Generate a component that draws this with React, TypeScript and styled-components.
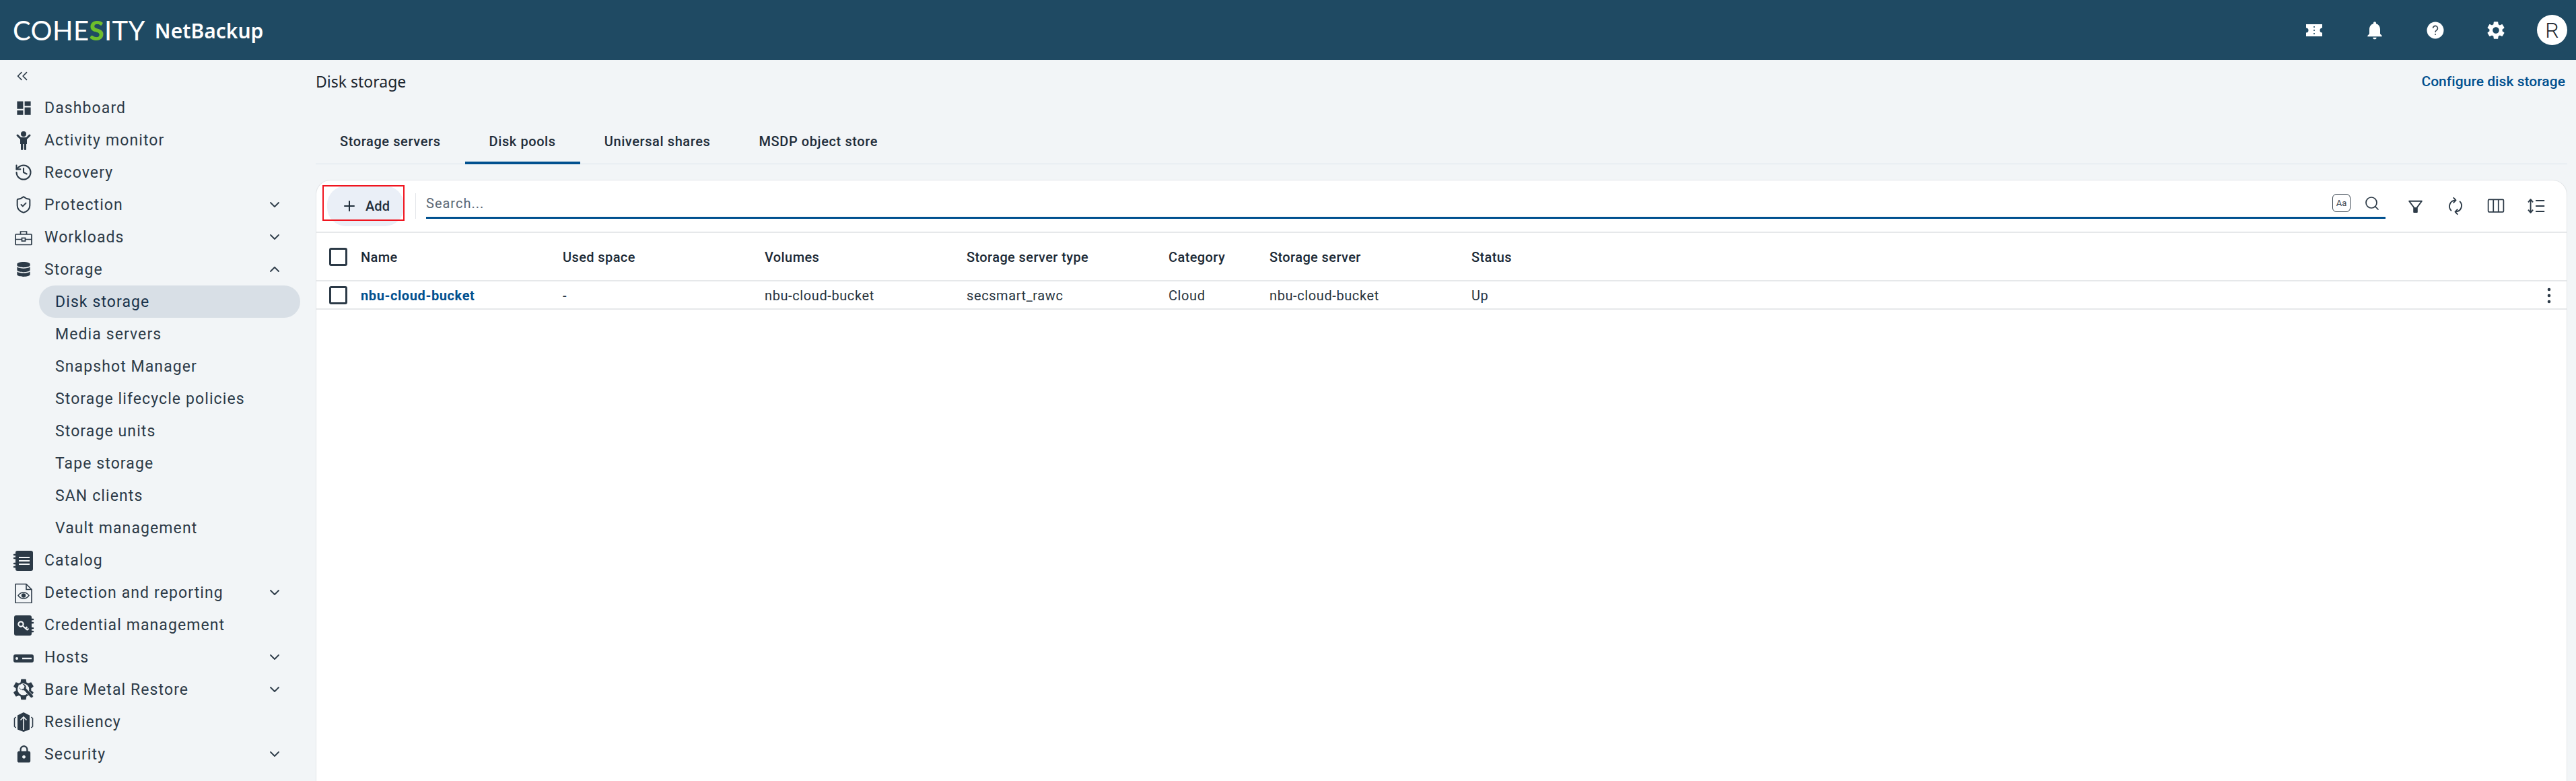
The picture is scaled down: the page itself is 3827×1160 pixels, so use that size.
import React from 'react';
import styled, { createGlobalStyle } from 'styled-components';
import { ChevronDown, ChevronUp, ChevronsLeft, History, Plus, Search, ShieldCheck } from 'lucide-react';
import { FaDatabase } from 'react-icons/fa';
import { MdDashboard, MdLock, MdNotifications, MdSettings } from 'react-icons/md';

const INK = '#2c3a47';
const BLUE = '#00508f';
const PAGE = '#f2f5f7';
const GEAR_PATH =
  'M19.14 12.94c.04-.3.06-.61.06-.94 0-.32-.02-.64-.07-.94l2.03-1.58a.49.49 0 0 0 .12-.61l-1.92-3.32a.488.488 0 0 0-.59-.22l-2.39.96c-.5-.38-1.03-.7-1.62-.94l-.36-2.54a.484.484 0 0 0-.48-.41h-3.84c-.24 0-.43.17-.47.41l-.36 2.54c-.59.24-1.13.57-1.62.94l-2.39-.96c-.22-.08-.47 0-.59.22L2.74 8.87c-.12.21-.08.47.12.61l2.03 1.58c-.05.3-.09.63-.09.94s.02.64.07.94l-2.03 1.58a.49.49 0 0 0-.12.61l1.92 3.32c.12.22.37.29.59.22l2.39-.96c.5.38 1.03.7 1.62.94l.36 2.54c.05.24.24.41.48.41h3.84c.24 0 .44-.17.47-.41l.36-2.54c.59-.24 1.13-.56 1.62-.94l2.39.96c.22.08.47 0 .59-.22l1.92-3.32c.12-.22.07-.47-.12-.61l-2.01-1.58z';

const GlobalStyle = createGlobalStyle`
  html, body {
    margin: 0;
    padding: 0;
    background: ${PAGE};
  }
  * {
    box-sizing: border-box;
  }
`;

const Canvas = styled.div`
  width: 3827px;
  height: 1160px;
  overflow: hidden;
  display: flex;
  flex-direction: column;
  background: ${PAGE};
  color: ${INK};
  font-family: Roboto, 'Liberation Sans', sans-serif;
`;

const TopBar = styled.header`
  flex: 0 0 89px;
  display: flex;
  align-items: center;
  padding: 0 13px 0 19px;
  background: #1f4a63;
  color: #fff;
`;

const Brand = styled.div`
  display: flex;
  align-items: center;
  gap: 14px;
  flex: 1;
`;

const LogoWord = styled.span`
  font-family: Lato, sans-serif;
  font-size: 40px;
  font-weight: 400;
  letter-spacing: 0.4px;
  line-height: 1;
`;

const LogoAccent = styled.span`
  color: #6ebe2c;
  font-weight: 900;
`;

const ProductName = styled.span`
  font-family: 'Noto Sans', sans-serif;
  font-size: 30px;
  font-weight: 600;
  line-height: 1;
  margin-top: 3px;
`;

const TopActions = styled.div`
  display: flex;
  align-items: center;
`;

const TopAction = styled.div`
  width: 90px;
  height: 48px;
  display: flex;
  align-items: center;
  justify-content: center;
  color: #fff;
`;

const Avatar = styled.div`
  width: 45px;
  height: 45px;
  margin-left: 16px;
  border-radius: 50%;
  display: flex;
  align-items: center;
  justify-content: center;
  background: #fff;
  color: #1c2630;
  font-size: 32px;
  font-weight: 300;
`;

const Body = styled.div`
  flex: 1;
  min-height: 0;
  display: flex;
`;

const Sidebar = styled.nav`
  flex: 0 0 469px;
`;

const CollapseRow = styled.div`
  height: 47px;
  display: flex;
  align-items: center;
  padding-left: 20px;
`;

const NavRow = styled.div`
  height: 48px;
  display: flex;
  align-items: center;
  padding: 0 49px 0 19px;
  font-size: 23px;
  letter-spacing: 1.1px;
  white-space: nowrap;
`;

const NavIcon = styled.span`
  flex: 0 0 32px;
  height: 32px;
  margin-right: 15px;
  display: flex;
  align-items: center;
  justify-content: center;
`;

const NavLabel = styled.span`
  flex: 1;
  padding-top: 1px;
`;

const SubRow = styled.div<{ $active?: boolean }>`
  height: 48px;
  width: 388px;
  margin-left: 58px;
  padding: 1px 0 0 24px;
  display: flex;
  align-items: center;
  border-radius: 24px;
  font-size: 23px;
  letter-spacing: 1.1px;
  background: ${({ $active }) => ($active ? '#d8dfe6' : 'transparent')};
  color: ${({ $active }) => ($active ? '#17314a' : INK)};
`;

const Main = styled.main`
  flex: 1;
  min-width: 0;
  display: flex;
  flex-direction: column;
  padding-right: 13px;
`;

const TitleRow = styled.div`
  flex: 0 0 64px;
  display: flex;
  align-items: center;
  justify-content: space-between;
  margin-bottom: 27px;
  padding-right: 3px;
`;

const Title = styled.h1`
  margin: 0;
  font-family: 'Noto Sans', sans-serif;
  font-size: 23px;
  font-weight: 400;
  color: #1c2630;
`;

const ConfigureLink = styled.a`
  font-size: 21px;
  font-weight: 500;
  letter-spacing: 0.05px;
  color: ${BLUE};
`;

const TabBar = styled.div`
  flex: 0 0 64px;
  display: flex;
  border-bottom: 1px solid #dbe3ea;
`;

const Tab = styled.div<{ $active?: boolean }>`
  padding: 0 36px;
  display: flex;
  align-items: center;
  font-size: 20px;
  font-weight: 500;
  letter-spacing: 0.6px;
  color: #1f2d3a;
  border-bottom: 4px solid ${({ $active }) => ($active ? BLUE : 'transparent')};
  margin-bottom: -1px;
`;

const Card = styled.section`
  flex: 1;
  margin-top: 23px;
  display: flex;
  flex-direction: column;
  background: #fff;
  border: 1px solid #e2e5e8;
  border-bottom: 0;
  border-radius: 22px 22px 0 0;
`;

const Toolbar = styled.div`
  flex: 0 0 78px;
  display: flex;
  align-items: center;
  padding: 0 15px 0 16px;
  border-bottom: 2px solid #e6e8ea;
`;

const AddButton = styled.div`
  position: relative;
  width: 114px;
  height: 60px;
  display: flex;
  align-items: center;
  justify-content: center;
  gap: 12px;
  border-radius: 28px;
  background: #eaeff7;
  font-size: 20px;
  font-weight: 500;
  color: #1f2d3a;
`;

const Annotation = styled.span`
  position: absolute;
  left: -7px;
  top: -1px;
  width: 122px;
  height: 53px;
  border: 2px solid #f0141e;
`;

const ToolDivider = styled.span`
  width: 1px;
  height: 38px;
  margin: 0 15px 0 17px;
  background: #e3e6e9;
`;

const SearchField = styled.div`
  flex: 1;
  height: 46px;
  margin-bottom: 8px;
  display: flex;
  align-items: center;
  padding-right: 8px;
  padding-top: 2px;
  border-bottom: 3px solid ${BLUE};
`;

const SearchHint = styled.span`
  flex: 1;
  font-size: 20px;
  letter-spacing: 1px;
  color: #5c6873;
`;

const CaseToggle = styled.span`
  width: 27px;
  height: 27px;
  margin-right: 20px;
  display: flex;
  align-items: center;
  justify-content: center;
  border: 1px solid #3a4650;
  border-radius: 6px;
  font-size: 13px;
  color: #3a4650;
`;

const ToolIcons = styled.div`
  display: flex;
  margin-left: 14px;
`;

const ToolIcon = styled.span`
  width: 60px;
  height: 48px;
  display: flex;
  align-items: center;
  justify-content: center;
  color: ${INK};
`;

const TableRow = styled.div<{ $head?: boolean }>`
  flex: 0 0 ${({ $head }) => ($head ? '72px' : '42px')};
  display: grid;
  grid-template-columns: 47px 300px 300px 300px 300px 150px 300px 1fr auto;
  align-items: center;
  padding: 2px 8px 0 19px;
  border-bottom: 2px solid #e6e8ea;
  font-size: 20px;
  font-weight: ${({ $head }) => ($head ? 500 : 400)};
  letter-spacing: ${({ $head }) => ($head ? '0.4px' : '0.6px')};
  color: ${({ $head }) => ($head ? '#1c2a36' : '#27333e')};
`;

const Checkbox = styled.span`
  width: 27px;
  height: 27px;
  margin-top: -2px;
  border: 3px solid ${INK};
  border-radius: 3px;
`;

const NameLink = styled.a`
  font-weight: 700;
  color: ${BLUE};
`;

const RowMenu = styled.span`
  grid-column: 9;
  display: flex;
  width: 36px;
  justify-content: center;
`;

const Glyph: React.FC<{ size?: number; children: React.ReactNode }> = ({ size = 32, children }) => (
  <svg width={size} height={size} viewBox="0 0 32 32" fill="none">
    {children}
  </svg>
);

const ActivityIcon = () => (
  <Glyph>
    <circle cx="16" cy="7" r="4" fill={INK} />
    <path d="M7 9l4.5 4.5h9L25 9" stroke={INK} strokeWidth="3" strokeLinecap="round" strokeLinejoin="round" />
    <path
      d="M11 13h10v9h-1v7.5a1.6 1.6 0 0 1-3.2 0V22h-1.6v7.5a1.6 1.6 0 0 1-3.2 0V22h-1z"
      fill={INK}
    />
  </Glyph>
);

const BriefcaseIcon = () => (
  <Glyph>
    <g stroke={INK} strokeWidth="1.7">
      <rect x="4" y="12" width="24" height="15.5" rx="1" />
      <path d="M11.5 12V8h9v4M4 19.5h9.5M18.5 19.5H28" />
      <rect x="13.5" y="17.5" width="5" height="4.5" />
    </g>
  </Glyph>
);

const CatalogIcon = () => (
  <Glyph>
    <rect x="4" y="2" width="26" height="30" rx="3" fill={INK} />
    <path d="M2 8h3M2 13h3M2 21h3M2 26h3" stroke={INK} strokeWidth="2.4" strokeLinecap="round" />
    <path d="M9 12h16M9 17h16M9 22h16" stroke="#f2f5f7" strokeWidth="2" />
  </Glyph>
);

const DetectionIcon = () => (
  <Glyph>
    <path d="M4 3.5h16l8 8V31.5H4z" stroke={INK} strokeWidth="1.6" strokeLinejoin="round" />
    <path d="M20 3.5v8h8" stroke={INK} strokeWidth="1.6" />
    <path d="M8 20.5c4-6 12-6 16 0-4 6-12 6-16 0z" stroke={INK} strokeWidth="1.4" />
    <circle cx="16" cy="20.5" r="3.2" fill={INK} />
  </Glyph>
);

const CredentialIcon = () => (
  <Glyph>
    <rect x="2" y="2" width="26" height="30" rx="3" fill={INK} />
    <path d="M27 8h3M27 13h3M27 21h3M27 26h3" stroke={INK} strokeWidth="2.4" strokeLinecap="round" />
    <circle cx="12" cy="15" r="3.6" stroke="#f2f5f7" strokeWidth="2.2" />
    <path d="M15 18l7 6M19 21.5l2.5-2.5M21.5 23.5l2-2" stroke="#f2f5f7" strokeWidth="2.2" />
  </Glyph>
);

const HostsIcon = () => (
  <Glyph>
    <rect x="1" y="12" width="30" height="12" rx="3" fill={INK} />
    <circle cx="6" cy="18" r="2" fill="#f2f5f7" />
    <path d="M14 18h14" stroke="#f2f5f7" strokeWidth="2.4" />
  </Glyph>
);

const RestoreIcon = () => (
  <Glyph>
    <g transform="translate(-3 -3) scale(1.58)">
      <path d={GEAR_PATH} fill={INK} />
    </g>
    <circle cx="15.7" cy="15.9" r="8.6" fill="#f2f5f7" />
    <path
      d="M9.5 8.8a6 6 0 0 0 2 7.5 6 6 0 0 0 5 .9l9.6 10.5a2.4 2.4 0 0 0 3.6-3.3L20 14.4a6 6 0 0 0-1.5-5.5 6 6 0 0 0-5-1.6l3.6 3.6-1 3.6-3.7 1-3.2-3.4z"
      fill={INK}
      stroke="#f2f5f7"
      strokeWidth="0.8"
    />
  </Glyph>
);

const ResiliencyIcon = () => (
  <Glyph>
    <path d="M16 2l9 4.5v21L16 31l-9-3.5v-21z" fill={INK} />
    <path d="M16 28V9M11.5 13.5L16 9l4.5 4.5" stroke="#f2f5f7" strokeWidth="1.6" />
    <path d="M4.6 9L2.5 11v12l2.1 2M27.4 9l2.1 2v12l-2.1 2" stroke={INK} strokeWidth="1.6" />
  </Glyph>
);

const TicketIcon = () => (
  <svg width="28" height="24" viewBox="0 0 28 24">
    <path d="M2 3h24v5.5a3.5 3.5 0 0 0 0 7V21H2v-5.5a3.5 3.5 0 0 0 0-7z" fill="#fff" />
    <path d="M14 6v12" stroke="#1f4a63" strokeWidth="1.6" strokeDasharray="2 3" />
  </svg>
);

const HelpIcon = () => (
  <svg width="26" height="26" viewBox="0 0 26 26">
    <circle cx="13" cy="13" r="12.5" fill="#fff" />
    <path
      d="M9.5 10a3.5 3.5 0 1 1 5.4 2.9c-1.2.8-1.9 1.4-1.9 3"
      fill="none"
      stroke="#33424f"
      strokeWidth="1.6"
    />
    <circle cx="13" cy="19" r="1" fill="#33424f" />
  </svg>
);

const FilterIcon = () => (
  <Glyph size={25}>
    <path d="M4 6h24L19 18v9h-6v-9z" stroke={INK} strokeWidth="2.4" strokeLinejoin="round" />
    <path d="M13 18h6v9h-6z" fill={INK} />
  </Glyph>
);

const RefreshIcon = () => (
  <Glyph size={30}>
    <path
      d="M9 23a9.5 9.5 0 0 1 6-16M23 9a9.5 9.5 0 0 1-6 16"
      stroke={INK}
      strokeWidth="2"
      strokeLinecap="round"
    />
    <path
      d="M13 3l3.6 3.8L13 10.5M19 21.5L15.4 25.2 19 29"
      stroke={INK}
      strokeWidth="2"
      strokeLinecap="round"
      strokeLinejoin="round"
    />
  </Glyph>
);

const ColumnsIcon = () => (
  <Glyph size={28}>
    <rect x="3" y="5" width="26" height="21" rx="1.5" stroke={INK} strokeWidth="2" />
    <path d="M11.7 5v21M20.3 5v21" stroke={INK} strokeWidth="2" />
  </Glyph>
);

const DensityIcon = () => (
  <Glyph size={30}>
    <path
      d="M7 6v20M3.2 10L7 5.5l3.8 4.5M3.2 22L7 26.5l3.8-4.5"
      stroke={INK}
      strokeWidth="2"
      strokeLinejoin="round"
    />
    <path d="M15 7.5h14M15 16h14M15 24.5h14" stroke={INK} strokeWidth="2" />
  </Glyph>
);

const KebabIcon = () => (
  <Glyph size={32}>
    <circle cx="16" cy="7" r="2.3" fill={INK} />
    <circle cx="16" cy="16" r="2.3" fill={INK} />
    <circle cx="16" cy="25" r="2.3" fill={INK} />
  </Glyph>
);

type NavEntry = {
  label: string;
  icon: React.ReactNode;
  chevron?: 'up' | 'down';
};

const topNav: NavEntry[] = [
  { label: 'Dashboard', icon: <MdDashboard size={27} /> },
  { label: 'Activity monitor', icon: <ActivityIcon /> },
  { label: 'Recovery', icon: <History size={28} strokeWidth={1.8} /> },
  { label: 'Protection', icon: <ShieldCheck size={28} strokeWidth={1.7} />, chevron: 'down' },
  { label: 'Workloads', icon: <BriefcaseIcon />, chevron: 'down' },
  { label: 'Storage', icon: <FaDatabase size={22} />, chevron: 'up' },
];

const storageItems = [
  'Disk storage',
  'Media servers',
  'Snapshot Manager',
  'Storage lifecycle policies',
  'Storage units',
  'Tape storage',
  'SAN clients',
  'Vault management',
];

const bottomNav: NavEntry[] = [
  { label: 'Catalog', icon: <CatalogIcon /> },
  { label: 'Detection and reporting', icon: <DetectionIcon />, chevron: 'down' },
  { label: 'Credential management', icon: <CredentialIcon /> },
  { label: 'Hosts', icon: <HostsIcon />, chevron: 'down' },
  { label: 'Bare Metal Restore', icon: <RestoreIcon />, chevron: 'down' },
  { label: 'Resiliency', icon: <ResiliencyIcon /> },
  { label: 'Security', icon: <MdLock size={29} />, chevron: 'down' },
];

const tabs = ['Storage servers', 'Disk pools', 'Universal shares', 'MSDP object store'];
const columns = ['Name', 'Used space', 'Volumes', 'Storage server type', 'Category', 'Storage server', 'Status'];
const row = ['-', 'nbu-cloud-bucket', 'secsmart_rawc', 'Cloud', 'nbu-cloud-bucket', 'Up'];

const NavItem: React.FC<{ entry: NavEntry }> = ({ entry }) => (
  <NavRow>
    <NavIcon>{entry.icon}</NavIcon>
    <NavLabel>{entry.label}</NavLabel>
    {entry.chevron === 'down' && <ChevronDown size={24} strokeWidth={1.8} />}
    {entry.chevron === 'up' && <ChevronUp size={24} strokeWidth={1.8} />}
  </NavRow>
);

export default function App() {
  return (
    <Canvas>
      <GlobalStyle />
      <TopBar>
        <Brand>
          <LogoWord>
            COHE<LogoAccent>S</LogoAccent>ITY
          </LogoWord>
          <ProductName>NetBackup</ProductName>
        </Brand>
        <TopActions>
          <TopAction>
            <TicketIcon />
          </TopAction>
          <TopAction>
            <MdNotifications size={32} />
          </TopAction>
          <TopAction>
            <HelpIcon />
          </TopAction>
          <TopAction>
            <MdSettings size={32} />
          </TopAction>
          <Avatar>R</Avatar>
        </TopActions>
      </TopBar>

      <Body>
        <Sidebar>
          <CollapseRow>
            <ChevronsLeft size={26} strokeWidth={1.5} />
          </CollapseRow>
          {topNav.map((entry) => (
            <NavItem key={entry.label} entry={entry} />
          ))}
          {storageItems.map((item, i) => (
            <SubRow key={item} $active={i === 0}>
              {item}
            </SubRow>
          ))}
          {bottomNav.map((entry) => (
            <NavItem key={entry.label} entry={entry} />
          ))}
        </Sidebar>

        <Main>
          <TitleRow>
            <Title>Disk storage</Title>
            <ConfigureLink>Configure disk storage</ConfigureLink>
          </TitleRow>

          <TabBar>
            {tabs.map((tab) => (
              <Tab key={tab} $active={tab === 'Disk pools'}>
                {tab}
              </Tab>
            ))}
          </TabBar>

          <Card>
            <Toolbar>
              <AddButton>
                <Annotation />
                <Plus size={24} strokeWidth={2} />
                Add
              </AddButton>
              <ToolDivider />
              <SearchField>
                <SearchHint>Search...</SearchHint>
                <CaseToggle>Aa</CaseToggle>
                <Search size={24} strokeWidth={1.7} />
              </SearchField>
              <ToolIcons>
                <ToolIcon>
                  <FilterIcon />
                </ToolIcon>
                <ToolIcon>
                  <RefreshIcon />
                </ToolIcon>
                <ToolIcon>
                  <ColumnsIcon />
                </ToolIcon>
                <ToolIcon>
                  <DensityIcon />
                </ToolIcon>
              </ToolIcons>
            </Toolbar>

            <TableRow $head>
              <Checkbox />
              {columns.map((col) => (
                <span key={col}>{col}</span>
              ))}
            </TableRow>

            <TableRow>
              <Checkbox />
              <NameLink>nbu-cloud-bucket</NameLink>
              {row.map((cell, i) => (
                <span key={i}>{cell}</span>
              ))}
              <RowMenu>
                <KebabIcon />
              </RowMenu>
            </TableRow>
          </Card>
        </Main>
      </Body>
    </Canvas>
  );
}
